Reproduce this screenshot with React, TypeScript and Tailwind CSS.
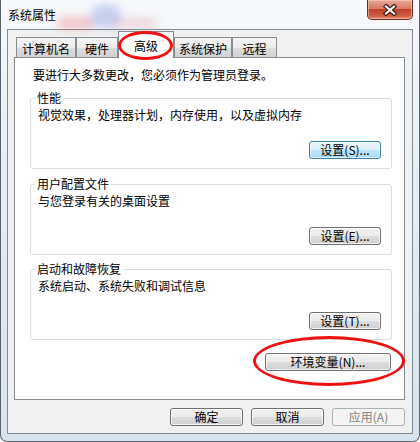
import type { ReactNode } from "react"

const font = "font-['Noto_Sans_CJK_SC','Noto_Sans',sans-serif]"

const btnBase = "h-[18px] flex items-center justify-center rounded-[3px] border text-[12px] leading-none"
const btnNormal =
  "border-[#707070] text-black bg-[linear-gradient(to_bottom,#f2f2f2_0%,#ebebeb_50%,#dddddd_51%,#cfcfcf_100%)] shadow-[inset_0_0_0_1px_rgba(255,255,255,0.7)]"
const btnFocus =
  "border-[#3c7fb1] text-black bg-[linear-gradient(to_bottom,#eaf6fd_0%,#d9f0fc_50%,#bee6fd_51%,#a7d9f5_100%)] shadow-[inset_0_0_0_1px_rgba(255,255,255,0.6)]"
const btnDisabled = "border-[#adb2b5] bg-[#f4f4f4] text-[#838383]"

function Btn({ children, w, kind = "normal" }: { children: ReactNode; w: string; kind?: "normal" | "focus" | "disabled" }) {
  const look = kind === "focus" ? btnFocus : kind === "disabled" ? btnDisabled : btnNormal
  return <div className={`${btnBase} ${look} ${w}`}>{children}</div>
}

const tabs = [
  { label: "计算机名", w: "w-[60px]" },
  { label: "硬件", w: "w-[42px]" },
  { label: "高级", w: "w-[56px]", active: true },
  { label: "系统保护", w: "w-[58px]" },
  { label: "远程", w: "w-[45px]" },
]

function Group({ title, desc, btn, className = "" }: { title: string; desc: string; btn: string; className?: string }) {
  return (
    <fieldset className={`h-[79px] border border-[#d5dfe5] rounded-[3px] pl-[7px] pr-[10px] ${className}`}>
      <legend className="ml-[-3px] px-[2px] leading-[16px]">{title}</legend>
      <p className="mt-[1px] leading-[16px]">{desc}</p>
      <div className="mt-[18px] flex justify-end">
        <Btn w="w-[72px]" kind={btn.includes("(S)") ? "focus" : "normal"}>
          {btn}
        </Btn>
      </div>
    </fieldset>
  )
}

export default function App() {
  return (
    <div className={`relative w-[420px] h-[442px] overflow-hidden ${font} text-[12px] text-black`}>
      <div className="flex flex-col h-full border-x border-b border-[#59636e] rounded-b-[7px] bg-[linear-gradient(to_bottom,#f7f9fc,#e6edf4_40%,#d9e3ed)]">
        {/* title bar */}
        <div className="relative h-[29px] flex items-start justify-between">
          <div className="absolute left-[56px] top-[17px] w-[38px] h-[12px] rounded-full bg-[#e05050] opacity-30 blur-[4px]" />
          <div className="absolute left-[90px] top-[4px] w-[30px] h-[24px] rounded-full bg-[#5f74d8] opacity-30 blur-[4px]" />
          <div className="absolute left-[112px] top-[18px] w-[44px] h-[10px] rounded-full bg-[#e07a8a] opacity-25 blur-[4px]" />
          <span className="relative pl-[7px] pt-[7px] leading-[16px]">系统属性</span>
          <div className="relative mr-[6px] w-[46px] h-[20px] flex items-center justify-center border border-t-0 border-[#6d2a1f] rounded-b-[5px] bg-[linear-gradient(to_bottom,#eaa897_0%,#d67a64_45%,#c2432c_50%,#cc5a3e_80%,#e38b69_100%)] shadow-[inset_0_0_0_1px_rgba(255,220,200,0.5)]">
            <svg width="14" height="12" viewBox="0 0 14 12">
              <path d="M3 2.5 L11 9.5 M11 2.5 L3 9.5" stroke="#3b1a14" strokeWidth="4.4" strokeLinecap="square" fill="none" />
              <path d="M3 2.5 L11 9.5 M11 2.5 L3 9.5" stroke="#ffffff" strokeWidth="2.2" strokeLinecap="square" fill="none" />
            </svg>
          </div>
        </div>

        {/* client area */}
        <div className="ml-[6px] w-[406px] h-[405px] border border-[#848a91] bg-[#f0f0f0] pt-[1px] pl-[6px]">
          <div className="w-[391px]">
            <div className="flex items-end h-[26px] pl-[2px]">
              {tabs.map((t) =>
                t.active ? (
                  <div
                    key={t.label}
                    className={`${t.w} relative z-10 h-[27px] mb-[-1px] border border-b-0 border-[#898c95] bg-white flex justify-center pt-[6px] leading-[16px]`}
                  >
                    {t.label}
                  </div>
                ) : (
                  <div
                    key={t.label}
                    className={`${t.w} h-[20px] border border-b-0 border-[#898c95] bg-[linear-gradient(to_bottom,#f4f4f4_0%,#ebebeb_50%,#dddddd_51%,#d2d2d2_100%)] flex justify-center pt-[3px] leading-[16px]`}
                  >
                    {t.label}
                  </div>
                )
              )}
            </div>

            <div className="h-[343px] border border-[#898c95] bg-white pt-[9px]">
              <p className="pl-[18px] leading-[16px]">要进行大多数更改，您必须作为管理员登录。</p>
              <div className="ml-[15px] w-[362px] mt-[7px] flex flex-col">
                <Group title="性能" desc="视觉效果，处理器计划，内存使用，以及虚拟内存" btn="设置(S)..." />
                <Group className="mt-[7px]" title="用户配置文件" desc="与您登录有关的桌面设置" btn="设置(E)..." />
                <Group className="mt-[6px]" title="启动和故障恢复" desc="系统启动、系统失败和调试信息" btn="设置(T)..." />
                <div className="mt-[13px] flex justify-end pr-[1px]">
                  <Btn w="w-[126px]">环境变量(N)...</Btn>
                </div>
              </div>
            </div>

            <div className="mt-[8px] flex justify-end gap-[8px]">
              <Btn w="w-[73px]">确定</Btn>
              <Btn w="w-[73px]">取消</Btn>
              <Btn w="w-[73px]" kind="disabled">
                应用(A)
              </Btn>
            </div>
          </div>
        </div>
      </div>

      {/* red annotation ellipses */}
      <div className="absolute z-20 left-[118px] top-[31px] w-[55px] h-[29px] rounded-[50%] border-[3px] border-[#ee1111]" />
      <div className="absolute z-20 left-[253px] top-[336px] w-[152px] h-[50px] rounded-[50%] border-[3px] border-[#ee1111]" />
    </div>
  )
}
